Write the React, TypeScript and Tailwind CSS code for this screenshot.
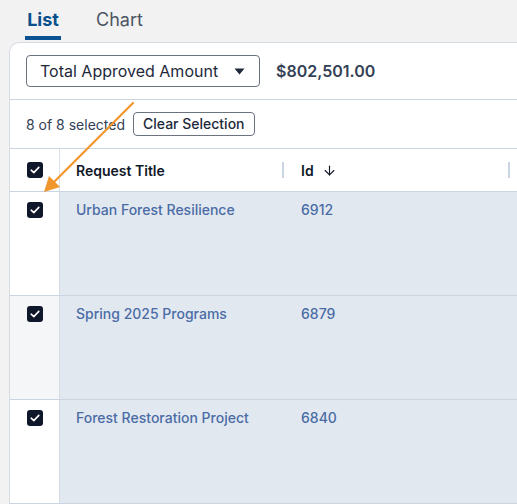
import { ArrowDown } from "lucide-react";

type Row = { title: string; id: number; stripe: boolean };

const ROWS: Row[] = [
  { title: "Urban Forest Resilience", id: 6912, stripe: false },
  { title: "Spring 2025 Programs", id: 6879, stripe: true },
  { title: "Forest Restoration Project", id: 6840, stripe: false },
];

function Check() {
  return (
    <span className="flex h-4 w-4 items-center justify-center rounded-[3px] bg-[#0f172a]">
      <svg width="10" height="8" viewBox="0 0 10 8" fill="none">
        <path d="M1.2 4.2 L3.8 6.6 L8.8 1.4" stroke="white" strokeWidth="1.6" strokeLinecap="round" strokeLinejoin="round" />
      </svg>
    </span>
  );
}

function Divider() {
  return <span className="h-4 w-[2px] bg-[#cbd5e1]" />;
}

export default function App() {
  return (
    <div
      className="relative h-[504px] w-[517px] overflow-hidden bg-[#f2f2f2]"
      style={{ fontFamily: "Inter, 'Liberation Sans', sans-serif" }}
    >
      {/* tabs */}
      <div className="flex h-[42px] items-end gap-[35px] pl-[25px]">
        <div className="flex flex-col items-center">
          <span className="px-[2px] text-[18px] font-bold leading-[22px] text-[#0a4f8c]">List</span>
          <span className="mt-[5px] h-[4px] w-[36px] bg-[#0a5291]" />
          <span className="h-[2px]" />
        </div>
        <div className="flex flex-col">
          <span className="text-[18px] leading-[22px] text-[#4b5563]">Chart</span>
          <span className="mt-[5px] h-[6px]" />
        </div>
      </div>

      {/* panel */}
      <div className="ml-[9px] w-[580px] rounded-tl-[10px] border border-r-0 border-[#d5dbe3] bg-white">
        <div className="flex h-[57px] items-center gap-4 border-b border-[#cbd5e1] pl-[16px]">
          <button className="flex h-[32px] w-[234px] items-center justify-between rounded-[4px] border border-[#6b7280] pl-[13px] pr-[14px] text-[16px] text-[#1e293b]">
            Total Approved Amount
            <svg width="11" height="7" viewBox="0 0 11 7">
              <path d="M0.5 0.5 H10.5 L5.5 6.5 Z" fill="#1e293b" />
            </svg>
          </button>
          <span className="text-[16px] font-semibold text-[#334155]">$802,501.00</span>
        </div>

        <div className="flex h-[49px] items-center gap-[8px] border-b border-[#cbd5e1] pl-[16px]">
          <span className="text-[14px] text-[#334155]">8 of 8 selected</span>
          <button className="h-[24px] rounded-[4px] border border-[#6b7280] px-[9px] text-[14px] font-medium leading-[20px] text-[#1e293b]">
            Clear Selection
          </button>
        </div>

        {/* header */}
        <div className="flex h-[43px] border-b border-[#cbd5e1]">
          <div className="flex w-[50px] items-center justify-center border-r border-[#dbe1e8]">
            <Check />
          </div>
          <div className="flex w-[224px] items-center justify-between pl-[16px]">
            <span className="text-[14px] font-semibold text-[#111827]">Request Title</span>
            <Divider />
          </div>
          <div className="flex w-[226px] items-center justify-between pl-[17px]">
            <span className="flex items-center gap-[8px] text-[14px] font-semibold text-[#111827]">
              Id
              <ArrowDown size={15} strokeWidth={1.8} className="text-[#111827]" />
            </span>
            <Divider />
          </div>
        </div>

        {ROWS.map((r) => (
          <div key={r.id} className="flex h-[104px] border-b border-[#cbd5e1]">
            <div
              className={`flex w-[50px] justify-center border-r border-[#d5dbe3] pt-[10px] ${r.stripe ? "bg-[#f5f6f7]" : "bg-white"}`}
            >
              <Check />
            </div>
            <div className="flex flex-1 bg-[#e2e8f0] pt-[7px] text-[14px] font-medium text-[#4a6ca6]">
              <span className="w-[224px] pl-[16px]">{r.title}</span>
              <span className="pl-[17px]">{r.id}</span>
            </div>
          </div>
        ))}
      </div>

      {/* annotation arrow */}
      <svg className="pointer-events-none absolute left-0 top-0" width="517" height="504">
        <line x1="133" y1="103" x2="52" y2="184" stroke="#f0962c" strokeWidth="2.2" strokeLinecap="round" />
        <path d="M44 192 L49 176 L60 187 Z" fill="#f0962c" />
      </svg>
    </div>
  );
}
